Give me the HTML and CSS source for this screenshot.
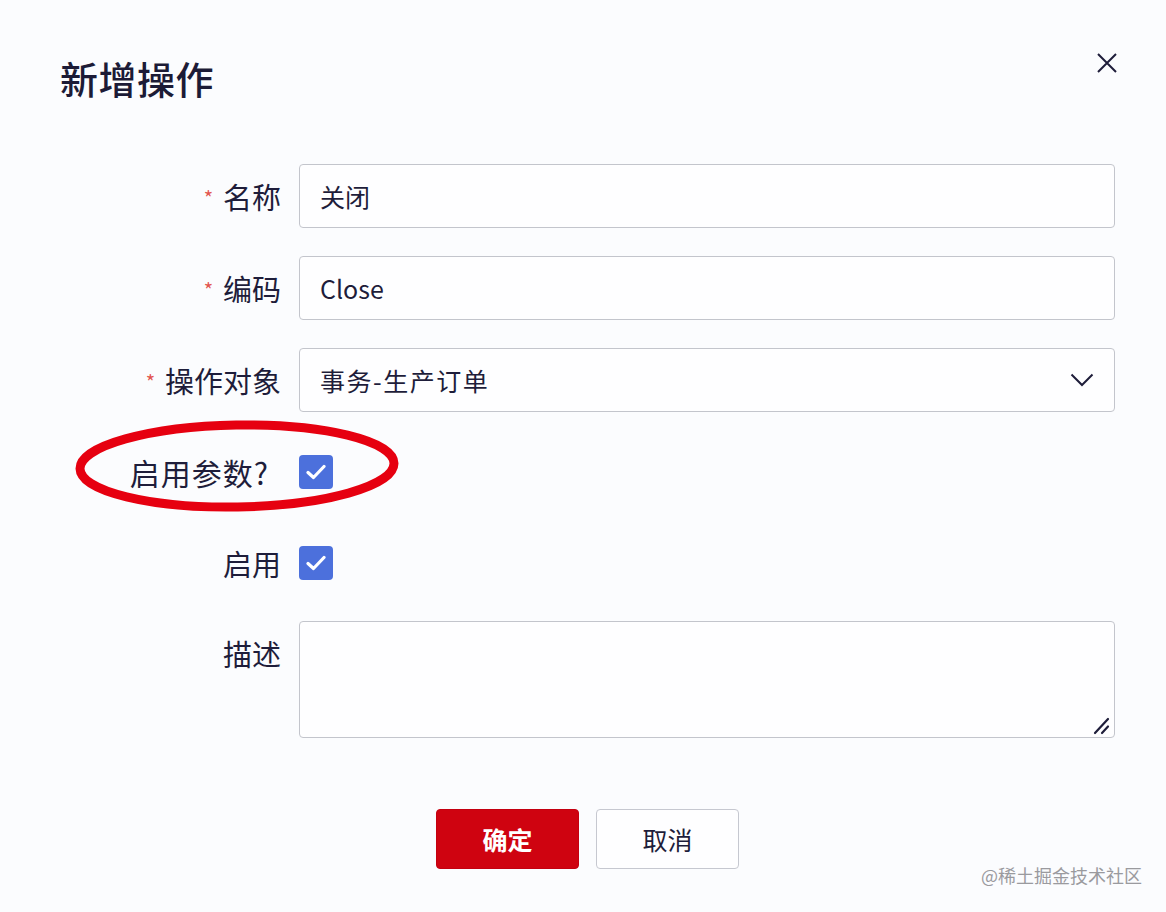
FILE: index.html
```html
<!DOCTYPE html>
<html lang="zh">
<head>
<meta charset="utf-8">
<title>新增操作</title>
<link rel="stylesheet" href="styles.css">
</head>
<body>
<div class="dialog">
  <div class="header">
    <h1 class="title">新增操作</h1>
    <button class="close" aria-label="关闭">
      <svg width="20" height="20" viewBox="0 0 20 20"><path d="M1 1L19 19M19 1L1 19" stroke="#1e1d3a" stroke-width="2" fill="none"/></svg>
    </button>
  </div>

  <div class="form">
    <label class="label"><span class="req">*</span>名称</label>
    <div class="field"><input class="input" value="关闭"></div>

    <label class="label"><span class="req">*</span>编码</label>
    <div class="field"><input class="input" value="Close"></div>

    <label class="label"><span class="req">*</span>操作对象</label>
    <div class="field">
      <div class="select">
        <span class="select-value">事务-生产订单</span>
        <svg width="24" height="14" viewBox="0 0 24 14"><path d="M1.5 1.5L12 12L22.5 1.5" stroke="#1e1d3a" stroke-width="2" fill="none"/></svg>
      </div>
    </div>

    <label class="label label-left">启用参数?</label>
    <div class="field field-check">
      <span class="checkbox"><svg width="20" height="16" viewBox="0 0 20 16"><path d="M2 8.5L7.5 13.5L18 2.5" stroke="#fff" stroke-width="3.2" fill="none" stroke-linecap="round" stroke-linejoin="round"/></svg></span>
    </div>

    <label class="label label-mid">启用</label>
    <div class="field field-check field-mid">
      <span class="checkbox"><svg width="20" height="16" viewBox="0 0 20 16"><path d="M2 8.5L7.5 13.5L18 2.5" stroke="#fff" stroke-width="3.2" fill="none" stroke-linecap="round" stroke-linejoin="round"/></svg></span>
    </div>

    <label class="label label-top">描述</label>
    <div class="field field-top">
      <div class="textarea-wrap">
        <textarea class="textarea"></textarea>
        <svg class="grip" width="18" height="18" viewBox="0 0 18 18"><path d="M2 16L15 2M9 16L15 9.5" stroke="#1e1d3a" stroke-width="2.2" fill="none" stroke-linecap="round"/></svg>
      </div>
    </div>
  </div>

  <div class="actions">
    <button class="btn btn-primary">确定</button>
    <button class="btn btn-default">取消</button>
  </div>

  <svg class="annotation" width="340" height="110" viewBox="0 0 340 110">
    <ellipse cx="170" cy="55" rx="157" ry="41" fill="none" stroke="#e60010" stroke-width="9" transform="rotate(-1 170 55)"/>
  </svg>

  <div class="watermark">@稀土掘金技术社区</div>
</div>
</body>
</html>
```

FILE: styles.css
```css
* { box-sizing: border-box; }
html, body {
  margin: 0;
  padding: 0;
}
body {
  width: 1166px;
  height: 912px;
  background: #fbfcfe;
  font-family: "Noto Sans CJK SC", "Noto Sans", sans-serif;
  color: #1e1d3a;
  overflow: hidden;
}
.dialog {
  position: relative;
  width: 1166px;
  height: 912px;
}
.header {
  display: flex;
  justify-content: space-between;
  align-items: flex-start;
  padding: 58px 48px 0 60px;
  height: 98px;
}
.title {
  margin: 0;
  font-size: 38px;
  line-height: 40px;
  font-weight: 500;
  letter-spacing: 0.5px;
  color: #1c1b36;
}
.close {
  border: 0;
  background: transparent;
  padding: 0;
  margin-top: -6px;
  width: 22px;
  height: 22px;
  display: flex;
  align-items: center;
  justify-content: center;
}
.form {
  display: grid;
  grid-template-columns: 200px 816px;
  column-gap: 18px;
  row-gap: 28px;
  margin-left: 81px;
  margin-top: 66px;
}
.label {
  display: flex;
  justify-content: flex-end;
  align-items: center;
  height: 64px;
  font-size: 29px;
  color: #1e1d3a;
  white-space: nowrap;
}
.label-left {
  margin-right: 12px;
  font-size: 30px;
  letter-spacing: 1px;
}
.label-mid, .field-mid {
  margin-top: -1px;
}
.label-top, .field-top {
  align-self: start;
  margin-top: -2px;
}
.req {
  color: #e2564f;
  font-size: 20px;
  margin-right: 10px;
  position: relative;
  top: 1px;
}
.field {
  min-height: 64px;
  display: flex;
  align-items: center;
}
.input {
  width: 816px;
  height: 64px;
  border: 1.5px solid #c3c5cc;
  border-radius: 4px;
  background: #fefeff;
  padding: 0 20px;
  font-family: "Noto Sans CJK SC", "Noto Sans", sans-serif;
  font-size: 25px;
  color: #1e1d3a;
  outline: none;
}
.select {
  width: 816px;
  height: 64px;
  border: 1.5px solid #c3c5cc;
  border-radius: 4px;
  background: #fefeff;
  padding: 0 20px;
  display: flex;
  justify-content: space-between;
  align-items: center;
  font-size: 25px;
}
.select-value {
  letter-spacing: 1.5px;
}
.field-check {
  height: 64px;
}
.checkbox {
  width: 34px;
  height: 34px;
  border-radius: 4px;
  background: #4c70dc;
  display: flex;
  align-items: center;
  justify-content: center;
}
.textarea-wrap {
  position: relative;
  width: 816px;
  height: 117px;
}
.textarea {
  display: block;
  width: 816px;
  height: 117px;
  border: 1.5px solid #c3c5cc;
  border-radius: 4px;
  background: #fefeff;
  resize: none;
  outline: none;
}
.grip {
  position: absolute;
  right: 4px;
  bottom: 3px;
}
.actions {
  display: flex;
  justify-content: center;
  gap: 17px;
  margin-top: 71px;
  padding-left: 9px;
}
.btn {
  width: 143px;
  height: 60px;
  border-radius: 4px;
  font-family: "Noto Sans CJK SC", "Noto Sans", sans-serif;
  font-size: 25px;
  padding: 0;
}
.btn-primary {
  background: #cf0310;
  border: 1px solid #c40010;
  color: #fff;
  font-weight: 700;
}
.btn-default {
  background: #fefeff;
  border: 1.5px solid #c6c8d0;
  color: #1e1d3a;
}
.annotation {
  position: absolute;
  left: 67px;
  top: 411px;
}
.watermark {
  position: absolute;
  right: 24px;
  bottom: 24px;
  font-size: 18px;
  color: #9a9a9e;
}
```
